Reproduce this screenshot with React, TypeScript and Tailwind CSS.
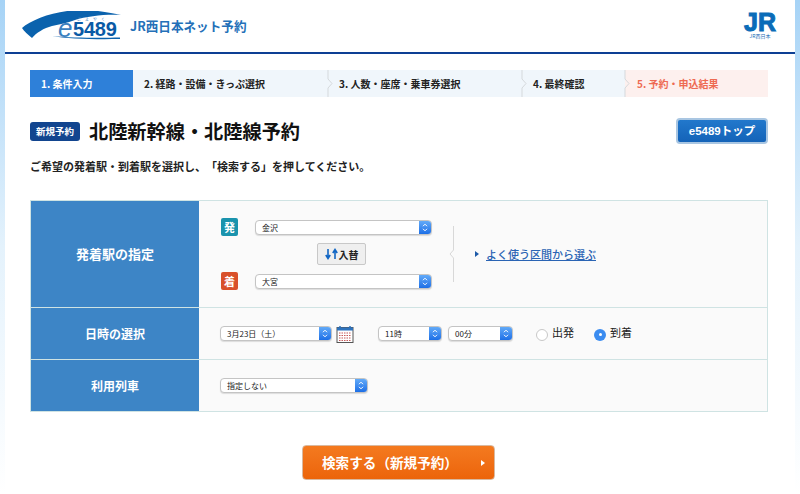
const FONT = "font-['Noto_Sans_CJK_JP','Liberation_Sans',sans-serif]";

const STEPS = [
  { label: "2. 経路・設備・きっぷ選択", width: "w-[195px]" },
  { label: "3. 人数・座席・乗車券選択", width: "w-[194px]" },
  { label: "4. 最終確認", width: "w-[103px]" },
];

function StepNotch() {
  return (
    <svg width="8" height="27" viewBox="0 0 8 27" className="absolute -left-px top-0">
      <path d="M1 0V9L5 13.5L1 18V27" fill="none" stroke="#d5d9dc" strokeWidth="1" />
    </svg>
  );
}

// Mac style popup: white field with the blue stepper on the right.
function Select({ value, width }: { value: string; width: string }) {
  return (
    <div className={`${width} flex h-[15px] items-stretch overflow-hidden rounded-[4px] border border-[#c4c4c4] bg-white shadow-[0_1px_1px_rgba(0,0,0,0.12)]`}>
      <span className="flex-1 truncate pl-[6px] text-[8px] leading-[13px] text-[#222]">{value}</span>
      <span className="flex w-[12px] items-center justify-center bg-gradient-to-b from-[#62aaf8] to-[#1c6fe6]">
        <svg width="6" height="9" viewBox="0 0 6 9">
          <path d="M1 3.2L3 1.2L5 3.2M1 5.8L3 7.8L5 5.8" fill="none" stroke="#fff" strokeWidth="1" />
        </svg>
      </span>
    </div>
  );
}

function Logo() {
  return (
    <div className="relative h-[30px] w-[100px]">
      <svg width="100" height="30" viewBox="0 0 100 30" className="absolute left-0 top-0">
        <path d="M0 17C10 8 35 -1 60 -1C75 -1 90 2 99 4C85 3 65 5 53 9C45 12 38 13 30 15C22 17 14 22 10 27C6 24 2 20 0 17Z" fill="#0a62ad" />
        <path d="M30 25C50 27 80 27 98 26.5V28C75 28.5 45 28 30 25Z" fill="#0a62ad" />
      </svg>
      <span className="absolute left-[36px] top-[10px] font-['Liberation_Sans',sans-serif] text-[26px] italic leading-[14px] text-[#3a80bf]">e</span>
      <span className="absolute left-[51px] top-[11px] font-['Liberation_Sans',sans-serif] text-[20px] font-bold leading-[14px] tracking-[-0.2px] text-[#0a5aa5]">5489</span>
      <span className="absolute left-[55px] top-[6px] text-[4px] leading-[5px] tracking-[4px] text-[#3a80bf]">ごよやく</span>
    </div>
  );
}

export default function App() {
  return (
    <div className={`${FONT} h-[494px] w-[800px] overflow-hidden bg-gradient-to-b from-[#a6d3f6] via-[#e4f2fc] via-50% to-white px-[5px] [text-spacing-trim:space-all]`}>
      <div className="h-full bg-white">
        {/* Header */}
        <header className="flex h-[54px] items-center justify-between border-b-2 border-[#0d3f94] pl-[17px] pr-[19px]">
          <div className="flex items-center gap-[8px]">
            <Logo />
            <span className="text-[12.6px] font-bold text-[#2470b8]">JR西日本ネット予約</span>
          </div>
          <div className="flex flex-col items-center">
            <span className="font-['Liberation_Sans',sans-serif] text-[25px] font-bold leading-[19px] text-[#0a6cb8] [-webkit-text-stroke:1px_#0a6cb8]">JR</span>
            <span className="text-[5px] leading-[7px] text-[#1a6db5]">JR西日本</span>
          </div>
        </header>

        <main className="pl-[25px] pr-[27px]">
          {/* Steps */}
          <ol className="mt-[16px] flex h-[27px] text-[10px] font-bold leading-[27px]">
            <li className="relative w-[103px] bg-[#2e80d9] pl-[11px] text-white">
              1. 条件入力
              <span className="absolute -right-[4px] top-[9px] h-0 w-0 border-y-[4.5px] border-l-[4px] border-y-transparent border-l-[#2e80d9]" />
            </li>
            {STEPS.map((step) => (
              <li key={step.label} className={`relative ${step.width} bg-[#f0f6fb] pl-[11px] text-[#222]`}>
                {step.label !== STEPS[0].label && <StepNotch />}
                {step.label}
              </li>
            ))}
            <li className="relative flex-1 bg-[#fdf0ee] pl-[12px] text-[#ee6a52]">
              <StepNotch />
              5. 予約・申込結果
            </li>
          </ol>

          {/* Title */}
          <div className="mt-[21px] flex h-[26px] items-center justify-between">
            <div className="flex items-center gap-[9px]">
              <span className="flex h-[19px] w-[50px] items-center justify-center rounded-[3px] bg-[#12458f] text-[9.5px] font-bold text-white">新規予約</span>
              <h1 className="text-[19.2px] font-bold leading-[25px] text-[#111]">北陸新幹線・北陸線予約</h1>
            </div>
            <button className="h-[26px] w-[92px] rounded-[4px] border-2 border-[#a9c6e2] bg-gradient-to-b from-[#2278cc] to-[#1463b8] font-['Liberation_Sans',sans-serif] text-[11.5px] font-bold text-white">
              e5489<span className={FONT}>トップ</span>
            </button>
          </div>

          <p className="mt-[14px] text-[11px] font-bold leading-[16px] text-[#222]">
            ご希望の発着駅・到着駅を選択し、「検索する」を押してください。
          </p>

          {/* Form table */}
          <div className="mt-[26px] border border-[#cfe3e3] bg-[#fafafa] text-white">
            <div className="flex h-[107px] border-b border-[#cfe3e3]">
              <div className="flex w-[168px] items-center justify-center bg-[#3d85c6] text-[13px] font-bold">発着駅の指定</div>
              <div className="flex flex-1 items-center">
                <div className="ml-[22px] flex w-[211px] flex-col">
                  <div className="flex items-center gap-[17px]">
                    <span className="flex h-[18px] w-[17px] items-center justify-center rounded-[2px] bg-[#1a93ad] text-[11px] font-bold">発</span>
                    <Select value="金沢" width="w-[177px]" />
                  </div>
                  <button className="ml-[96px] mt-[7px] flex h-[22px] w-[49px] items-center justify-center rounded-[2px] border border-[#c8c8c8] bg-[#efefef] text-[10px] font-bold text-[#222]">
                    <svg width="13" height="12" viewBox="0 0 13 12" className="mr-[1px]">
                      <path d="M3 1V10M0.8 7L3 10.5L5.2 7M10 11V2M7.8 5L10 1.5L12.2 5" fill="none" stroke="#1266c4" strokeWidth="1.6" />
                    </svg>
                    入替
                  </button>
                  <div className="mt-[7px] flex items-center gap-[17px]">
                    <span className="flex h-[18px] w-[17px] items-center justify-center rounded-[2px] bg-[#d9502a] text-[11px] font-bold">着</span>
                    <Select value="大宮" width="w-[177px]" />
                  </div>
                </div>
                <div className="relative ml-[21px] h-[56px] w-[1px]">
                  <svg width="6" height="56" viewBox="0 0 6 56" className="absolute left-[-4px] top-0">
                    <path d="M4.5 0V24L1 28L4.5 32V56" fill="none" stroke="#d8d8d8" strokeWidth="1" />
                  </svg>
                </div>
                <a className="ml-[21px] flex items-center text-[11px] font-medium text-[#2a64b4] underline">
                  <span className="mr-[7px] h-0 w-0 border-y-[3px] border-l-[4px] border-y-transparent border-l-[#1d5aa8]" />
                  よく使う区間から選ぶ
                </a>
              </div>
            </div>

            <div className="flex h-[52px] border-b border-[#cfe3e3]">
              <div className="flex w-[168px] items-center justify-center bg-[#3d85c6] text-[12px] font-bold">日時の選択</div>
              <div className="flex flex-1 items-center text-[#222]">
                <div className="ml-[21px]">
                  <Select value="3月23日（土）" width="w-[112px]" />
                </div>
                <svg width="18" height="18" viewBox="0 0 18 18" className="ml-[4px]">
                  <rect x="1" y="2.5" width="16" height="15" fill="#fff" stroke="#555" strokeWidth="1" />
                  <rect x="1" y="2.5" width="16" height="3" fill="#2d73bd" />
                  <path d="M4 1v3M14 1v3" stroke="#2d73bd" strokeWidth="1.5" />
                  <path d="M3 8h12M3 10.5h12M3 13h12M3 15.5h12" stroke="#c65a5a" strokeWidth="1.2" strokeDasharray="1.5 1" />
                </svg>
                <div className="ml-[24px]">
                  <Select value="11時" width="w-[64px]" />
                </div>
                <div className="ml-[6px]">
                  <Select value="00分" width="w-[65px]" />
                </div>
                <label className="ml-[23px] flex items-center gap-[4px] text-[11px]">
                  <span className="mt-[3px] h-[12px] w-[12px] rounded-full border border-[#c8c8c8] bg-white" />
                  <span className="-mt-[2px]">出発</span>
                </label>
                <label className="ml-[20px] flex items-center gap-[4px] text-[11px]">
                  <span className="mt-[2px] flex h-[12px] w-[12px] items-center justify-center rounded-full bg-[#3b8cf0]">
                    <span className="h-[3px] w-[3px] rounded-full bg-white" />
                  </span>
                  <span className="-mt-[2px]">到着</span>
                </label>
              </div>
            </div>

            <div className="flex h-[51px]">
              <div className="flex w-[168px] items-center justify-center bg-[#3d85c6] text-[12px] font-bold">利用列車</div>
              <div className="flex flex-1 items-center pl-[21px]">
                <Select value="指定しない" width="w-[148px]" />
              </div>
            </div>
          </div>

          {/* Search */}
          <div className="mt-[33px] flex justify-center pr-[2px]">
            <button className="relative h-[35px] w-[193px] rounded-[4px] border border-[#d9b9a0] bg-gradient-to-b from-[#f47a1f] to-[#ec6409] pr-[16px] text-[13.6px] font-bold text-white">
              検索する（新規予約）
              <span className="absolute right-[9px] top-[14px] h-0 w-0 border-y-[3px] border-l-[4px] border-y-transparent border-l-white" />
            </button>
          </div>
        </main>
      </div>
    </div>
  );
}
